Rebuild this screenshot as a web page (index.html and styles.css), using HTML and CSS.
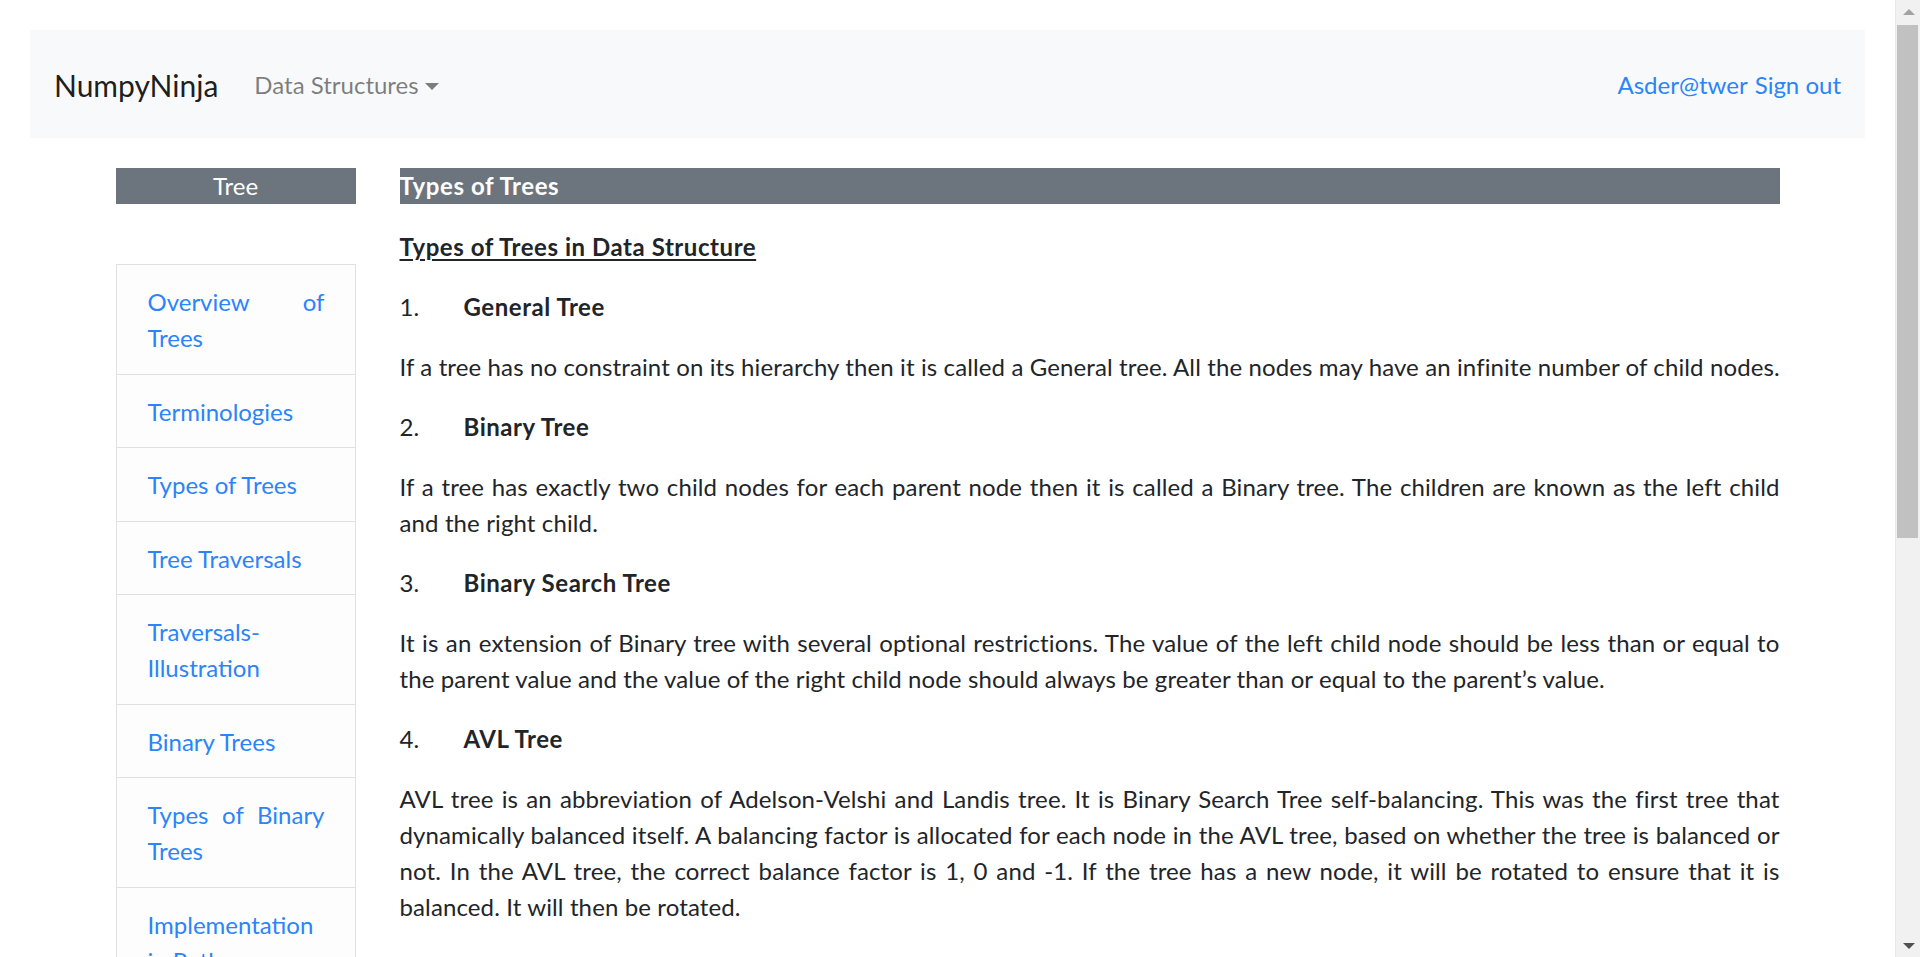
FILE: index.html
```html
<!DOCTYPE html>
<html lang="en">
<head>
<meta charset="utf-8">
<title>Types of Trees - NumpyNinja</title>
<link rel="stylesheet" href="styles.css">
</head>
<body>
<div class="page">
  <nav class="navbar">
    <a class="brand" href="#">NumpyNinja</a>
    <a class="nav-link" href="#">Data Structures<span class="caret"></span></a>
    <div class="nav-right">
      <a class="user-link" href="#">Asder@twer</a>
      <a class="user-link" href="#">Sign out</a>
    </div>
  </nav>

  <div class="container">
    <aside class="sidebar">
      <div class="side-title">Tree</div>
      <div class="list-group">
        <a class="list-item" href="#">Overview of Trees</a>
        <a class="list-item" href="#">Terminologies</a>
        <a class="list-item" href="#">Types of Trees</a>
        <a class="list-item" href="#">Tree Traversals</a>
        <a class="list-item" href="#">Traversals-Illustration</a>
        <a class="list-item" href="#">Binary Trees</a>
        <a class="list-item" href="#">Types of Binary Trees</a>
        <a class="list-item" href="#">Implementation in Python</a>
      </div>
    </aside>

    <main class="content">
      <div class="content-title">Types of Trees</div>
      <p><b><u>Types of Trees in Data Structure</u></b></p>

      <p class="item-head"><span class="num">1.</span><b>General Tree</b></p>
      <p class="single">If a tree has no constraint on its hierarchy then it is called a General tree. All the nodes may have an infinite number of child nodes.</p>

      <p class="item-head"><span class="num">2.</span><b>Binary Tree</b></p>
      <p><span class="ln">If a tree has exactly two child nodes for each parent node then it is called a Binary tree. The children are known as the left child</span><span class="ln last">and the right child.</span></p>

      <p class="item-head"><span class="num">3.</span><b>Binary Search Tree</b></p>
      <p><span class="ln">It is an extension of Binary tree with several optional restrictions. The value of the left child node should be less than or equal to</span><span class="ln last">the parent value and the value of the right child node should always be greater than or equal to the parent’s value.</span></p>

      <p class="item-head"><span class="num">4.</span><b>AVL Tree</b></p>
      <p><span class="ln">AVL tree is an abbreviation of Adelson-Velshi and Landis tree. It is Binary Search Tree self-balancing. This was the first tree that</span><span class="ln">dynamically balanced itself. A balancing factor is allocated for each node in the AVL tree, based on whether the tree is balanced or</span><span class="ln">not. In the AVL tree, the correct balance factor is 1, 0 and -1. If the tree has a new node, it will be rotated to ensure that it is</span><span class="ln last">balanced. It will then be rotated.</span></p>
    </main>
  </div>
</div>

<div class="scrollbar">
  <div class="sb-button"><span class="arrow-up"></span></div>
  <div class="sb-thumb"></div>
  <div class="sb-track"></div>
  <div class="sb-button"><span class="arrow-down"></span></div>
</div>
</body>
</html>
```

FILE: styles.css
```css
html, body {
  height: 100%;
}

body {
  margin: 0;
  display: flex;
  overflow: hidden;
  background: #ffffff;
  font-family: "Lato", "Noto Sans", "DejaVu Sans", sans-serif;
  font-size: 24px;
  line-height: 36px;
  color: #212529;
}

a {
  text-decoration: none;
}

.page {
  flex: 1;
  min-width: 0;
  height: 100%;
  overflow: hidden;
}

/* ---------- navbar ---------- */
.navbar {
  display: flex;
  align-items: center;
  height: 108px;
  margin: 30px 30px 0 30px;
  padding: 2px 24px 0 24px;
  box-sizing: border-box;
  background: #f8f9fa;
}

.brand {
  font-size: 30px;
  line-height: 45px;
  color: rgba(0, 0, 0, 0.9);
  margin-right: 24px;
}

.nav-link {
  display: flex;
  align-items: center;
  padding: 0 12px;
  color: rgba(0, 0, 0, 0.5);
  font-size: 24px;
}

.caret {
  display: inline-block;
  width: 0;
  height: 0;
  margin-left: 6px;
  margin-top: 2px;
  border-top: 7px solid rgba(0, 0, 0, 0.5);
  border-left: 7px solid transparent;
  border-right: 7px solid transparent;
}

.nav-right {
  margin-left: auto;
  display: flex;
  gap: 7px;
}

.user-link {
  color: #2b84f8;
  font-size: 24px;
}

/* ---------- layout ---------- */
.container {
  display: flex;
  align-items: flex-start;
  gap: 44px;
  width: 1664px;
  margin: 30px auto 0 auto;
}

.sidebar {
  width: 240px;
  flex: none;
}

.side-title {
  background: #6c757d;
  color: #ffffff;
  text-align: center;
  line-height: 36px;
  margin-bottom: 60px;
}

.list-group {
  display: flex;
  flex-direction: column;
}

.list-item {
  display: block;
  padding: 19px 30px 17.5px 31px;
  border: 1px solid #e0e0e0;
  border-top-width: 0;
  background: #fdfdfe;
  color: #2b84f8;
  text-align: justify;
  line-height: 36px;
}

.list-item:first-child {
  border-top-width: 1px;
}

/* ---------- content ---------- */
.content {
  width: 1380px;
  flex: none;
  text-align: justify;
  letter-spacing: 0.12px;
  padding-top: 1px;
}

.content b {
  letter-spacing: 0.55px;
}

.content-title {
  background: #6c757d;
  color: #ffffff;
  font-weight: 700;
  line-height: 36px;
  margin: -1px 0 25px 0;
  text-align: left;
  letter-spacing: 0.6px;
}

.content p {
  margin: 0 0 24px 0;
}

.content u {
  text-underline-offset: 3px;
  text-decoration-thickness: 2px;
}

.item-head {
  text-align: left;
}

.num {
  display: inline-block;
  width: 64px;
}

.single {
  text-align: left;
  white-space: nowrap;
}

.ln {
  display: block;
  text-align: justify;
  text-align-last: justify;
}

.ln.last {
  text-align-last: left;
}

/* ---------- scrollbar ---------- */
.scrollbar {
  width: 25px;
  flex: none;
  height: 100%;
  display: flex;
  flex-direction: column;
  background: #f1f1f1;
  border-left: 1px solid #e8e8e8;
  box-sizing: border-box;
}

.sb-button {
  height: 25px;
  flex: none;
  display: flex;
  align-items: center;
  justify-content: center;
  padding-left: 1px;
}

.arrow-up {
  width: 0;
  height: 0;
  border-left: 6px solid transparent;
  border-right: 6px solid transparent;
  border-bottom: 6px solid #a3a3a3;
  margin-top: -2px;
}

.arrow-down {
  width: 0;
  height: 0;
  border-left: 6px solid transparent;
  border-right: 6px solid transparent;
  border-top: 6px solid #505050;
  margin-top: 2px;
}

.sb-thumb {
  height: 513px;
  flex: none;
  margin: 0 2px 0 1px;
  background: #c1c1c1;
}

.sb-track {
  flex: 1;
}
```
